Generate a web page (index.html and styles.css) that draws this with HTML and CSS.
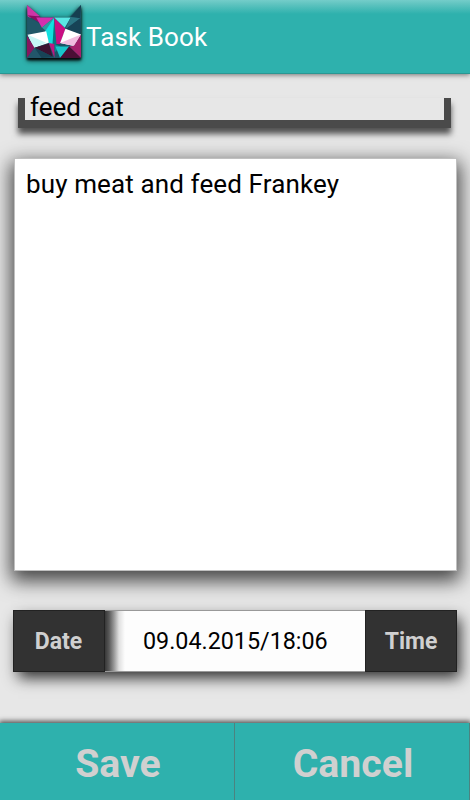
FILE: index.html
```
<!DOCTYPE html>
<html lang="en">
<head>
    <meta charset="UTF-8">
    <meta name="viewport" content="width=device-width, initial-scale=1.0">
    <title>Task Book</title>
    <link rel="stylesheet" href="styles.css">
</head>
<body>
    <header class="header">
        <svg class="logo" viewBox="80 14 163 160" preserveAspectRatio="none">
            <path fill="#1b5365" d="M80 14 L119 52 H208 L243 14 V174 H80 Z"/>
            <path fill="#cf36a7" d="M80 14 L119 48 L82 53 Z"/>
            <path fill="#8c0d62" d="M80 45 L119 49 L125 72 Z"/>
            <path fill="#205868" d="M80 47 L125 75 L138 93 L82 104 Z"/>
            <path fill="#d42fae" d="M108 52 H162 L125 83 Z"/>
            <path fill="#2b9d9f" d="M125 82 L162 52 L138 93 Z"/>
            <path fill="#12e0df" d="M162 52 L132 98 L148 132 L163 132 Z"/>
            <path fill="#c90f83" d="M162 52 L196 86 L180 132 L163 132 Z"/>
            <path fill="#087780" d="M162 58 L157 132 H169 Z"/>
            <path fill="#5be7e4" d="M162 52 H212 L194 83 Z"/>
            <path fill="#163f50" d="M212 50 L243 14 L240 54 Z"/>
            <path fill="#2a7482" d="M212 50 L241 54 L196 87 Z"/>
            <path fill="#174356" d="M241 54 L243 104 L196 87 Z"/>
            <path fill="#fff" d="M82 104 L138 93 L146 128 L101 143 Z"/>
            <path fill="#c5f5f5" d="M82 104 L138 128 L101 143 Z"/>
            <path fill="#fff" d="M196 86 L243 103 L222 138 L180 129 Z"/>
            <path fill="#f1bddf" d="M243 103 L180 129 L222 138 Z"/>
            <path fill="#86165f" d="M80 107 L103 144 L80 174 Z"/>
            <path fill="#22566a" d="M103 143 L126 174 H80 Z"/>
            <path fill="#3b1231" d="M103 143 L146 130 L158 170 Z"/>
            <path fill="#174356" d="M103 143 L158 170 L124 174 Z"/>
            <path fill="#bd1680" d="M146 129 L163 132 L163 174 Z"/>
            <path fill="#078991" d="M163 132 L181 139 L164 157 Z"/>
            <path fill="#19c4ca" d="M166 139 H208 L180 174 Z"/>
            <path fill="#a4216c" d="M243 104 L243 174 L207 139 L222 137 Z"/>
            <path fill="#4b0e35" d="M207 139 L243 174 H180 Z"/>
        </svg>
        <h1 class="title">Task Book</h1>
    </header>

    <main class="content">
        <div class="name-field"><span class="name-text">feed cat</span></div>
        <div class="note"><span class="note-text">buy meat and feed Frankey</span></div>
        <div class="date-row">
            <button class="pick pick-date"><span class="date-label">Date</span></button>
            <div class="date-value"><span class="date-text">09.04.2015/18:06</span></div>
            <button class="pick pick-time"><span class="time-label">Time</span></button>
        </div>
    </main>

    <footer class="actions">
        <button class="action"><span class="save-label">Save</span></button>
        <button class="action"><span class="cancel-label">Cancel</span></button>
    </footer>
</body>
</html>
```
FILE: styles.css
```
* {
    box-sizing: border-box;
}

body {
    display: flex;
    flex-direction: column;
    height: 800px;
    margin: 0;
    overflow: hidden;
    background-color: #e7e7e7;
    color: #000;
    font-family: Roboto, sans-serif;
}

button {
    padding: 0;
    border: none;
    font-family: inherit;
    font-weight: bold;
    color: #d0d0d0;
}

.header {
    display: flex;
    height: 74px;
    padding: 5px 0 0 27px;
    background: linear-gradient(#74cdca 0, #60c4c0 4px, #2eb1ad 14px);
    border-bottom: 1px solid #2a9793;
    box-shadow: 0 1px 5px rgba(0, 0, 0, 0.5);
}

.logo {
    width: 54px;
    height: 53px;
    overflow: visible;
    filter: drop-shadow(0 2px 1px rgba(0, 0, 0, 0.8)) drop-shadow(0 1px 2px rgba(0, 0, 0, 0.8));
}

.title {
    margin: 0 0 0 5px;
    color: #fff;
    font-size: 26px;
    font-weight: normal;
    letter-spacing: 0.1px;
    line-height: 64px;
}

.content {
    flex: 1;
    padding: 24px 13px 0;
}

/* text field with an open top, like the old android underline */
.name-field {
    height: 30px;
    margin: 0 6px 0 5px;
    padding-left: 5px;
    background-color: #e7e7e7;
    border: solid #4a4a4a;
    border-width: 0 7px 8px;
    box-shadow: 0 6px 6px rgba(0, 0, 0, 0.65);
    font-size: 26px;
    line-height: 19px;
}

.note {
    height: 413px;
    margin: 30px 0 0 1px;
    padding: 10px 11px;
    background-color: #fff;
    border: 1px solid #c0c0c0;
    box-shadow: 0 7px 18px 3px rgba(0, 0, 0, 0.7);
    font-size: 26px;
    letter-spacing: 0.12px;
    line-height: 30px;
}

.date-row {
    display: flex;
    height: 62px;
    margin-top: 39px;
    box-shadow: 4px 7px 14px -1px rgba(0, 0, 0, 0.8);
}

.pick {
    width: 92px;
    background-color: #323232;
    border: 1px solid #222;
    font-size: 23px;
}

.pick-date {
    padding-right: 1px;
}

.date-value {
    flex: 1;
    padding-left: 38px;
    background: linear-gradient(to right, #383838 0, #585858 4px, #999 9px, #e0e0e0 14px, #fdfdfd 20px);
    border: solid #999;
    border-width: 1px 0;
    font-size: 23.3px;
    line-height: 61px;
}

.actions {
    display: flex;
    height: 77px;
    box-shadow: 0 -1px 5px 1px rgba(0, 0, 0, 0.65);
}

.action {
    flex: 1;
    padding: 5px 0 0 2px;
    background-color: #2eb1ad;
    border-right: 1px solid #4b8380;
    font-size: 39.2px;
}
```
